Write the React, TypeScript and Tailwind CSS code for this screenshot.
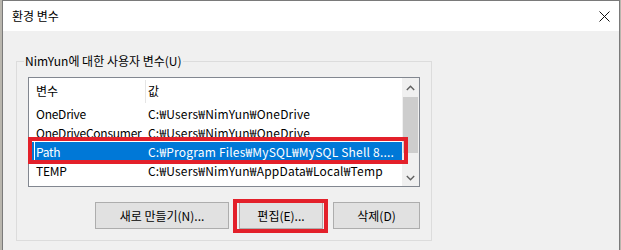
import React from "react";

const rows = [
  { name: "OneDrive", value: "C:₩Users₩NimYun₩OneDrive" },
  { name: "OneDriveConsumer", value: "C:₩Users₩NimYun₩OneDrive" },
  { name: "Path", value: "C:₩Program Files₩MySQL₩MySQL Shell 8....", selected: true },
  { name: "TEMP", value: "C:₩Users₩NimYun₩AppData₩Local₩Temp" },
];

function Chevron({ down }: { down?: boolean }) {
  return (
    <svg width="9" height="6" viewBox="0 0 9 6" className="block">
      <path
        d={down ? "M0.8 1 L4.5 4.7 L8.2 1" : "M0.8 5 L4.5 1.3 L8.2 5"}
        fill="none"
        stroke="#606060"
        strokeWidth="1.4"
      />
    </svg>
  );
}

export default function App() {
  return (
    <div className="relative w-[621px] h-[250px] overflow-hidden bg-[#b9b6ae] pl-[2px] font-['Noto_Sans_CJK_KR','Noto_Sans',sans-serif] text-[12px] text-black">
      <div className="w-[618px] h-[251px] border border-[#7a7a7a] flex flex-col">
        {/* title bar */}
        <div className="h-[30px] bg-white flex items-center justify-between pl-[9px] pr-[9px] shrink-0">
          <span className="leading-none">환경 변수</span>
          <svg width="11" height="11" viewBox="0 0 11 11">
            <path d="M0.5 0.5 L10.5 10.5 M10.5 0.5 L0.5 10.5" stroke="#111" strokeWidth="1" />
          </svg>
        </div>
        {/* body */}
        <div className="flex-1 bg-[#f0f0f0] pt-[30px] pl-[13px]">
          <div className="relative w-[416px] h-[180px] border border-[#dcdcdc] pl-[11px] pt-[15px]">
            <span className="absolute left-[7px] top-[-10px] px-[1px] bg-[#f0f0f0] leading-[18px]">
              NimYun에 대한 사용자 변수(U)
            </span>
            {/* list */}
            <div className="w-[392px] h-[110px] border border-[#828790] bg-white flex overflow-hidden">
              <div className="flex-1 flex flex-col">
                <div className="h-[26px] shrink-0 flex items-center">
                  <div className="w-[117px] h-[23px] border-r border-[#e5e5e5] flex items-center pl-[7px]">변수</div>
                  <div className="pl-[2px]">값</div>
                </div>
                {rows.map((r) => (
                  <div
                    key={r.name}
                    className={
                      r.selected
                        ? "relative h-[19px] shrink-0 flex items-center bg-[#0078d7] text-white"
                        : "relative h-[19px] shrink-0 flex items-center"
                    }
                  >
                    {r.selected && <span className="absolute left-[5px] top-0 h-full w-px bg-white" />}
                    <div className="w-[118px] pl-[7px] whitespace-nowrap tracking-[-0.25px]">{r.name}</div>
                    <div className="pl-[1px] whitespace-nowrap tracking-[0.2px]">{r.value}</div>
                  </div>
                ))}
              </div>
              {/* scrollbar */}
              <div className="w-[17px] bg-[#f0f0f0] flex flex-col items-center shrink-0">
                <div className="h-[19px] flex items-center justify-center">
                  <Chevron />
                </div>
                <div className="w-[15px] h-[56px] bg-[#cdcdcd]" />
                <div className="flex-1" />
                <div className="h-[17px] flex items-center justify-center">
                  <Chevron down />
                </div>
              </div>
            </div>
            {/* buttons */}
            <div className="flex justify-end mt-[15px] w-[392px]">
              <button className="w-[134px] h-[27px] bg-[#e1e1e1] border border-[#adadad] leading-none">
                새로 만들기(N)...
              </button>
              <button className="ml-[10px] w-[84px] h-[27px] bg-[#e1e1e1] border border-[#adadad] leading-none">
                편집(E)...
              </button>
              <button className="ml-[10px] w-[87px] h-[27px] bg-[#e1e1e1] border border-[#adadad] leading-none">
                삭제(D)
              </button>
            </div>
          </div>
        </div>
      </div>
      {/* red annotation boxes */}
      <div className="absolute left-[28px] top-[137px] w-[380px] h-[27px] border-4 border-[#e3202a]" />
      <div className="absolute left-[233px] top-[199px] w-[95px] h-[34px] border-4 border-[#e3202a]" />
    </div>
  );
}
